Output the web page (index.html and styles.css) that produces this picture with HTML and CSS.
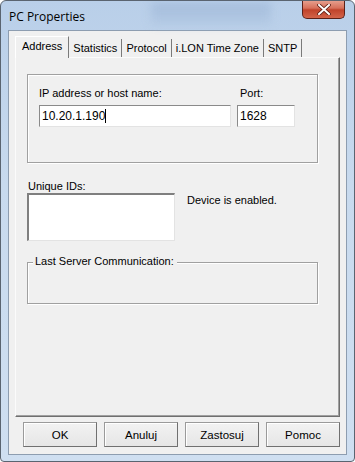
FILE: index.html
```html
<!DOCTYPE html>
<html lang="en">
<head>
    <meta charset="UTF-8">
    <title>PC Properties</title>
    <link rel="stylesheet" href="styles.css">
</head>
<body>
    <div class="window">
        <!-- Title bar -->
        <div class="titlebar">
            <span class="title">PC Properties</span>
            <div class="blur-note"></div>
            <div class="close-btn">
                <svg width="14" height="11" viewBox="0 0 14 11">
                    <path d="M2 1 L12 10 M12 1 L2 10" stroke="#5a1a10" stroke-width="3.6" stroke-linecap="square"/>
                    <path d="M2 1 L12 10 M12 1 L2 10" stroke="#ffffff" stroke-width="2" stroke-linecap="square"/>
                </svg>
            </div>
        </div>

        <!-- Client area -->
        <div class="client">
            <div class="tabs">
                <div class="tab active">Address</div>
                <div class="tab">Statistics</div>
                <div class="tab">Protocol</div>
                <div class="tab">i.LON Time Zone</div>
                <div class="tab">SNTP</div>
            </div>
            <div class="tab-panel">
                <div class="group-box address-group">
                    <div class="field host-field">
                        <label>IP address or host name:</label>
                        <div class="textbox">10.20.1.190<span class="caret"></span></div>
                    </div>
                    <div class="field port-field">
                        <label>Port:</label>
                        <div class="textbox">1628</div>
                    </div>
                </div>

                <div class="ids-row">
                    <div class="ids-col">
                        <label>Unique IDs:</label>
                        <div class="listbox"></div>
                    </div>
                    <div class="device-status">Device is enabled.</div>
                </div>

                <div class="group-box server-group">
                    <span class="legend">Last Server Communication:</span>
                </div>
            </div>

            <div class="buttons">
                <button>OK</button>
                <button>Anuluj</button>
                <button>Zastosuj</button>
                <button>Pomoc</button>
            </div>
        </div>
    </div>
</body>
</html>
```

FILE: styles.css
```css
/* PC Properties dialog */
body {
    margin: 0;
    padding: 0;
    font-family: 'Liberation Sans', Arial, sans-serif;
    font-size: 11px;
    color: #000;
}

.window {
    width: 355px;
    height: 462px;
    box-sizing: border-box;
    border: 1px solid #5a6470;
    border-radius: 6px 6px 4px 4px;
    background: linear-gradient(to bottom, #b9cfe9 0%, #c8daee 40%, #cfdff1 100%);
    display: flex;
    flex-direction: column;
    overflow: hidden;
}

.titlebar {
    height: 29px;
    display: flex;
    align-items: flex-start;
}

.title {
    font-family: 'Open Sans', 'Noto Sans', sans-serif;
    font-size: 12px;
    margin: 7px 0 0 8px;
    color: #000;
}

.blur-note {
    width: 120px;
    height: 22px;
    margin: 2px 0 0 66px;
    background: linear-gradient(to bottom, #9fb8d8, #b3c9e4);
    filter: blur(4px);
    opacity: 0.8;
}

.close-btn {
    width: 43px;
    height: 19px;
    margin: -1px 9px 0 auto;
    box-sizing: border-box;
    border: 1px solid #5b2119;
    border-top: none;
    border-radius: 0 0 5px 5px;
    background: linear-gradient(to bottom, #e8a493 0%, #d7705b 45%, #c0432b 55%, #d3644a 100%);
    display: flex;
    align-items: center;
    justify-content: center;
}

.client {
    margin: 0 7px 6px 7px;
    flex: 1;
    background-color: #f0f0f0;
    border: 1px solid #8d9db0;
    padding: 6px 6px 0 6px;
    display: flex;
    flex-direction: column;
}

.tabs {
    display: flex;
    height: 20px;
    padding-left: 2px;
    align-items: flex-end;
}

.tab {
    height: 18px;
    line-height: 18px;
    padding: 0 4px;
    border-right: 1px solid #7a7a7a;
    color: #000;
}

.tab.active {
    height: 21px;
    line-height: 19px;
    padding: 0 6px;
    margin-left: -2px;
    margin-bottom: -1px;
    background-color: #f0f0f0;
    border-left: 1px solid #ffffff;
    border-top: 1px solid #ffffff;
    position: relative;
    z-index: 1;
}

.tab-panel {
    height: 360px;
    box-sizing: border-box;
    border-top: 1px solid #fbfbfb;
    border-left: 1px solid #fbfbfb;
    border-right: 1px solid #6f6f6f;
    border-bottom: 1px solid #6f6f6f;
    box-shadow: inset -1px -1px 0 #a0a0a0;
    padding: 16px 21px 0 11px;
}

.group-box {
    border: 1px solid #a0a0a0;
    box-shadow: inset 1px 1px 0 #ffffff, 1px 1px 0 #ffffff;
    position: relative;
}

.address-group {
    height: 89px;
    box-sizing: border-box;
    display: flex;
    padding: 12px 0 0 11px;
}

.field label {
    display: block;
    margin-bottom: 6px;
}

.host-field {
    width: 192px;
}

.port-field {
    width: 58px;
    margin-left: 6px;
}

.port-field label {
    margin-left: 3px;
}

.textbox {
    height: 22px;
    box-sizing: border-box;
    background-color: #ffffff;
    border-top: 1px solid #8a8a8a;
    border-left: 1px solid #8a8a8a;
    border-right: 1px solid #e3e3e3;
    border-bottom: 1px solid #e3e3e3;
    padding: 3px 0 0 2px;
    font-size: 12px;
}

.caret {
    display: inline-block;
    width: 1px;
    height: 14px;
    background-color: #000;
    vertical-align: -3px;
}

.ids-row {
    display: flex;
    margin-top: 17px;
}

.ids-col label {
    display: block;
    margin-bottom: 1px;
    padding-left: 1px;
}

.listbox {
    width: 148px;
    height: 48px;
    box-sizing: border-box;
    background-color: #ffffff;
    border-top: 2px solid #7f7f7f;
    border-left: 2px solid #7f7f7f;
    border-right: 1px solid #e3e3e3;
    border-bottom: 1px solid #e3e3e3;
}

.device-status {
    margin: 14px 0 0 12px;
}

.server-group {
    height: 40px;
    margin-top: 21px;
}

.legend {
    position: absolute;
    top: -8px;
    left: 5px;
    padding: 0 3px 0 2px;
    background-color: #f0f0f0;
}

.buttons {
    display: flex;
    gap: 7px;
    padding: 5px 0 0 8px;
}

button {
    width: 75px;
    height: 25px;
    font-family: 'Liberation Sans', Arial, sans-serif;
    font-size: 11.5px;
    color: #000;
    background: linear-gradient(to bottom, #f2f2f2, #e6e6e6);
    border: 1px solid #707070;
    border-top-color: #9a9a9a;
    border-left-color: #9a9a9a;
    box-shadow: inset 1px 1px 0 #ffffff;
    border-radius: 0;
    padding: 0;
}
```
